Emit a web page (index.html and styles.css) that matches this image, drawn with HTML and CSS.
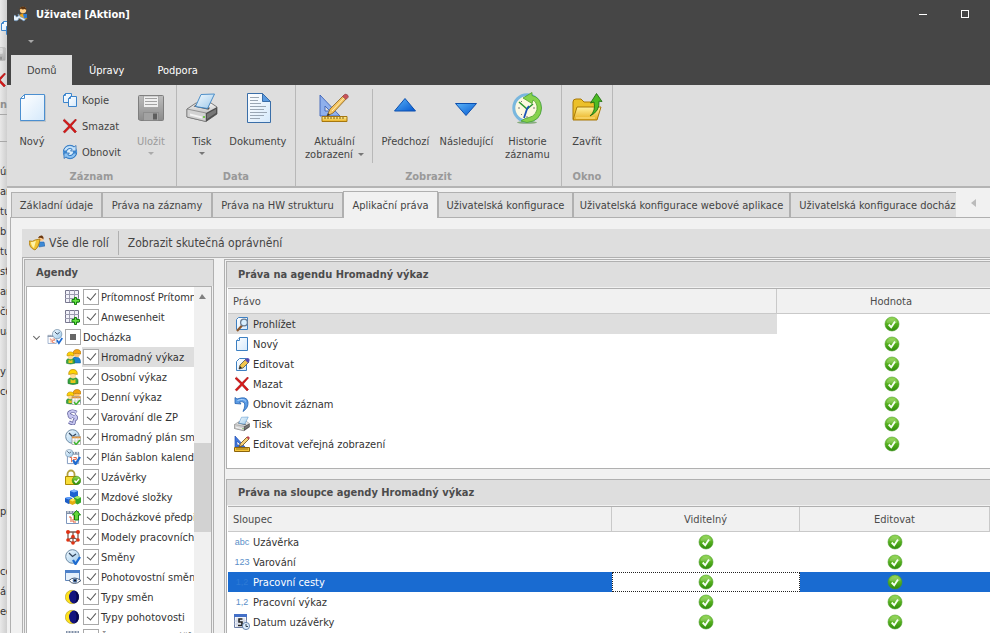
FILE: index.html
```html
<!DOCTYPE html>
<html lang="cs">
<head>
<meta charset="utf-8">
<title>Uživatel [Aktion]</title>
<link rel="stylesheet" href="styles.css">
</head>
<body>
<svg class="defs" aria-hidden="true">
  <defs>
    <linearGradient id="gPage" x1="0" y1="0" x2="1" y2="1"><stop offset="0" stop-color="#fff"/><stop offset="1" stop-color="#d5e9fb"/></linearGradient>
    <linearGradient id="gBlue" x1="0" y1="0" x2="1" y2="1"><stop offset="0" stop-color="#5bb4f8"/><stop offset="1" stop-color="#0457cf"/></linearGradient>
    <linearGradient id="gGreen" x1="0" y1="0" x2="0" y2="1"><stop offset="0" stop-color="#9bdc5c"/><stop offset=".5" stop-color="#55b01d"/><stop offset="1" stop-color="#2f8a0c"/></linearGradient>
    <linearGradient id="gGold" x1="0" y1="0" x2="0" y2="1"><stop offset="0" stop-color="#fff3a0"/><stop offset="1" stop-color="#e9ae1c"/></linearGradient>
    <linearGradient id="gGrey" x1="0" y1="0" x2="0" y2="1"><stop offset="0" stop-color="#f4f4f4"/><stop offset="1" stop-color="#9b9b9b"/></linearGradient>
    <linearGradient id="gSteel" x1="0" y1="0" x2="0" y2="1"><stop offset="0" stop-color="#bdbdbd"/><stop offset="1" stop-color="#8b8b8b"/></linearGradient>
    <linearGradient id="gSky" x1="0" y1="0" x2="1" y2="1"><stop offset="0" stop-color="#f4fbff"/><stop offset="1" stop-color="#9cc8ea"/></linearGradient>

    <symbol id="user" viewBox="0 0 16 16"><path d="M5 9q3-3 7 0l1 4H5z" fill="#e8a520" stroke="#9a6208" stroke-width=".6"/><path d="M9 8h4v4h-3z" fill="#2c7ad0"/><circle cx="9" cy="4" r="3.2" fill="#ffd08a"/><path d="M5.500 4Q5.500.5 9 .5t3.500 4L11 3Q8 4 7 2.500z" fill="#5a3311"/><path d="M1 9a3 3 0 1 0 4 3l5 3 1.500-2L6 10.500A3 3 0 0 0 4 8l.5 2L2.500 11z" fill="#e9f3fb" stroke="#6a94bd" stroke-width=".7"/></symbol>
    <symbol id="new32" viewBox="0 0 32 32"><path d="M8.500 3.500h21.500v26.500h-26v-23z" fill="#8a9aaa" opacity=".35"/><path d="M8.500 2.500h20v26h-24v-22z" fill="url(#gPage)" stroke="#4b8fd0"/><path d="M4.500 6.500h4v-4z" fill="#fff" stroke="#4b8fd0"/></symbol>
    <symbol id="copy" viewBox="0 0 16 16"><path d="M3.500 1.500h6v9h-8v-7z" fill="url(#gPage)" stroke="#3b84cc"/><path d="M1.500 3.500h2v-2" fill="none" stroke="#3b84cc"/><path d="M8.500 4.500h6v10h-8v-8z" fill="url(#gPage)" stroke="#3b84cc"/><path d="M6.500 6.500h2v-2" fill="none" stroke="#3b84cc"/></symbol>
    <symbol id="del" viewBox="0 0 16 16"><path d="M1 2.500l1.500-1.300L8 6.600 13.500 1l1 1L9.300 8l5.200 5.500-1.500 1.500L8 9.600 2.700 15l-1.500-1.300L6.700 8z" fill="#d81717" stroke="#8e0b0b" stroke-width=".5"/></symbol>
    <symbol id="refresh" viewBox="0 0 16 16"><circle cx="8" cy="8" r="7.200" fill="#4c97dd"/><circle cx="8" cy="8" r="3" fill="#dceefb"/><path d="M1.500 7a6.500 6.500 0 0 1 10.500-4l2-1.500V7H8.500l1.700-1.800A3.600 3.600 0 0 0 4.500 7z" fill="#c3e2fb" stroke="#1f63ae" stroke-width=".7"/><path d="M14.500 9a6.500 6.500 0 0 1-10.500 4l-2 1.500V9h5.500l-1.700 1.800A3.600 3.600 0 0 0 11.500 9z" fill="#8cc3f3" stroke="#1f63ae" stroke-width=".7"/></symbol>
    <symbol id="save" viewBox="0 0 32 32"><path d="M3.500 4.500q0-1 1-1h23q1 0 1 1v23q0 1-1 1h-22l-2-1z" fill="url(#gSteel)" stroke="#7e7e7e"/><path d="M8.500 4h15v11.500h-15z" fill="#efefef" stroke="#8f8f8f" stroke-width=".6"/><path d="M10 6.500h12M10 9.500h12M10 12.500h12" stroke="#a2a2a2"/><path d="M8.500 20.500h15v8h-15z" fill="#a2a2a2" stroke="#818181" stroke-width=".6"/><path d="M18 21.500h4v6h-4z" fill="#5d5d5d"/></symbol>
    <symbol id="print" viewBox="0 0 32 32"><path d="M1 17l9-6h15l6 4v7L20 29.500 1 25z" fill="url(#gGrey)" stroke="#5d5d5d" stroke-width=".8"/><path d="M1 17l19 4v8.500L1 25z" fill="#d2d2d2" stroke="#6a6a6a" stroke-width=".6"/><path d="M20 21l11-6v7l-11 7.500z" fill="#4e4e4e"/><path d="M21 22l9-5v4l-9 6z" fill="#777"/><path d="M4 21.500l12 3v2L4 23.500z" fill="#f3f3f3"/><circle cx="18" cy="25" r="1" fill="#55c327"/><path d="M7.500 14.500l15 3.300 1.500-2-14-3.300z" fill="#555"/><path d="M9.500 14.500L15 2.500l13.500-.5-7 14.500z" fill="url(#gSky)" stroke="#3c84c4" stroke-width=".9"/></symbol>
    <symbol id="docs" viewBox="0 0 32 32"><path d="M5.500 1.500h15l8 8v21h-23z" fill="url(#gPage)" stroke="#3a6ea8"/><path d="M20.500 1.500l8 8h-8z" fill="#5a9ae0" stroke="#3a6ea8"/><path d="M8 5.500h9M8 8.500h8M8 11.500h11M8 14.500h16M8 17.500h14M8 20.500h17M8 23.500h14M8 26.500h10" stroke="#9aa6b3"/></symbol>
    <symbol id="design" viewBox="0 0 32 32"><path d="M2 3l20 21H2zM7 14v5h5z" fill="#8fb0ec" fill-rule="evenodd" stroke="#3c62b8" stroke-width=".9"/><path d="M4 24.500h25v5H4z" fill="url(#gGold)" stroke="#a6770f"/><path d="M7 25v2m3-2v2m3-2v2m3-2v2m3-2v2m3-2v2m3-2v2" stroke="#7f5c10"/><path d="M9 24l3-7L26 3l3 3-14 15z" fill="#f3c260" stroke="#86601c" stroke-width=".8"/><path d="M14 19L27 5" stroke="#fff0b5"/><path d="M24.500 4.500L27 2q3 0 3.500 3L28 7.500z" fill="#c9525a" stroke="#7c3f42" stroke-width=".5"/><path d="M9 24l1-3 2 2z" fill="#333"/></symbol>
    <symbol id="design16" viewBox="0 0 16 16"><path d="M1 0l10 11H1zM3 5v4h4z" fill="#3f77e0" fill-rule="evenodd" stroke="#2450b0" stroke-width=".7"/><path d="M.5 11.500h15v4H.5z" fill="#f5c53a" stroke="#8c640b"/><path d="M3 12v2m2-2v2m2-2v2m2-2v2m2-2v2m2-2v2" stroke="#7f5c10" stroke-width=".8"/><path d="M5 11l1.500-3.500L13 1l2 2-6.500 6.500z" fill="#f6cf76" stroke="#6b4c14" stroke-width=".8"/><path d="M12.500 1.500L14 0l2 2-1.500 1.500z" fill="#bd4350"/></symbol>
    <symbol id="up" viewBox="0 0 32 32"><path d="M16 6.500l10.500 12.500h-21z" fill="url(#gBlue)" stroke="#0c4fae"/></symbol>
    <symbol id="down" viewBox="0 0 32 32"><path d="M16 23.500L5.500 11.500h21z" fill="url(#gBlue)" stroke="#0c4fae"/></symbol>
    <symbol id="history" viewBox="0 0 32 32"><ellipse cx="16" cy="30.500" rx="10" ry="1.300" fill="#4d8a3a" opacity=".6"/><circle cx="16" cy="16" r="13.200" fill="#fcf8e0" stroke="#79b7de" stroke-width="3"/><path d="M10 29q4-3 8-3.500A10 10 0 0 0 26 14q-1-5-4-6l-1 3.500L12 6l9-5.500v3q9 2 9.500 12.500Q30 29 16 30.500z" fill="#86d24c" stroke="#4ca02b" stroke-width=".8"/><path d="M7 16h2M24 16h-2M10 9l1 1M10 23l1-1M16 24v2" stroke="#777"/><path d="M8 10l8 7 6-5" fill="none" stroke="#2b9630" stroke-width="1.600"/><path d="M18 14l-2 3-3 9" fill="none" stroke="#1b53b8" stroke-width="1.800"/></symbol>
    <symbol id="close32" viewBox="0 0 32 32"><path d="M2 10q0-3 3-3h5l3 3h13v17H2z" fill="#ecc02a" stroke="#a87908"/><path d="M6 15h24l-4 13H2z" fill="url(#gGold)" stroke="#a87908"/><path d="M5 26h19" stroke="#ffe58b"/><path d="M19 24q6-5 4-14l-3.500 1 6-9.500 5.500 8-3-.3q1 10-9 14.800z" fill="#4cbb24" stroke="#216f12" stroke-width=".9"/></symbol>
    <symbol id="role" viewBox="0 0 16 16"><circle cx="12" cy="3.500" r="2.500" fill="#ffc98b"/><path d="M9 3q1-3 4-2.500 2 1 1.500 4Q13 2 9 3z" fill="#6a3710"/><path d="M9 7h6l1 4-6 1z" fill="#3d89d5" stroke="#1e5ba2" stroke-width=".5"/><path d="M0 6q4 1 6-1l5-1q-1 8-5 11Q0 13 0 6z" fill="#f1c232" stroke="#a4730b" stroke-width=".8"/><path d="M2 7q3 0 5-1.500L5 13Q2 11 2 7z" fill="#fff3a8"/></symbol>
    <symbol id="gridadd" viewBox="0 0 16 16"><path d="M.5 1.500h13v12H.5z" fill="#f2f2fa" stroke="#77778e"/><path d="M4.500 1v12M9.500 1v12M0 5.500h14M0 9.500h14" stroke="#9a9aae"/><path d="M9.500 8.500h2v2h3v2.500h-3v2.500h-2v-2.500h-2.500v-2.500h2.500z" fill="#68e044" stroke="#13830d"/></symbol>
    <symbol id="cal" viewBox="0 0 16 16"><path d="M1.500 3.500h12v11h-12z" fill="#fff" stroke="#7d96bd"/><path d="M1 2h13v3H1z" fill="#8090a8"/><path d="M3 1v3m3-3v3m3-3v3m3-3v3" stroke="#f6f6f6"/><path d="M4 8h2v5M8 8h3v2H8v3h3" fill="none" stroke="#e25b35"/></symbol>
    <symbol id="clock" viewBox="0 0 16 16"><circle cx="7.500" cy="7.500" r="6.800" fill="url(#gSky)" stroke="#6d8ba5"/><path d="M4 4l3.500 3.500L11 5" fill="none" stroke="#31455c" stroke-width="1.300"/></symbol>
    <symbol id="tick" viewBox="0 0 16 16"><path d="M8 11l2.500 4L15 8" fill="none" stroke="#1e6bd0" stroke-width="2.300"/></symbol>
    <symbol id="calclock" viewBox="0 0 16 16"><use href="#cal" x="0" y="4" width="11" height="12"/><use href="#clock" x="5" y="0" width="11" height="11"/><use href="#tick" x="4" y="2" width="12" height="14"/></symbol>
    <symbol id="person" viewBox="0 0 16 16"><path d="M3 14.500v-3q0-3 5-3t5 3v3q-5 2-10 0z" fill="#37a540" stroke="#176d27" stroke-width=".6"/><path d="M5.500 10l2.500 1.500L10.500 10v4h-5z" fill="#e8c51c"/><ellipse cx="8" cy="6" rx="3" ry="3.500" fill="#ffdb94"/><path d="M3.700 5.500Q3.500.5 8 .5t4.300 5Q8 3.500 3.700 5.500z" fill="#ffd400" stroke="#b88600" stroke-width=".7"/></symbol>
    <symbol id="people" viewBox="0 0 16 16"><g><path d="M7 12q1-5 5-4 4 1 3.500 6H9z" fill="#1c83cf" stroke="#14588f" stroke-width=".5"/><circle cx="12" cy="5.500" r="2.800" fill="#ffc36b"/><path d="M8 5q0-4.500 4-4.500T16 5q-4-1.500-8 0z" fill="#f5a50d" stroke="#ad6b00" stroke-width=".6"/></g><use href="#person" x="-1" y="2" width="13" height="14"/></symbol>
    <symbol id="minigrid" viewBox="0 0 16 16"><path d="M7 7.500h8.500v8H7z" fill="#fff" stroke="#888" stroke-width=".6"/><path d="M7 8.500h8.500" stroke="#e49232" stroke-width="1.600"/><path d="M10 8v7m3-7v7m-6-3h8" stroke="#bdbdbd" stroke-width=".6"/><path d="M9 13l2 2.500L15 11" fill="none" stroke="#3db52d" stroke-width="1.500"/></symbol>
    <symbol id="peoplegrid" viewBox="0 0 16 16"><use href="#people" width="16" height="16"/><use href="#minigrid" width="16" height="16"/></symbol>
    <symbol id="section" viewBox="0 0 16 16"><path d="M11.500 3.500Q8 1 5 3t2 4 3.500 3-1.500 3.500-5-.5M5 5q-2 2.500 2 4M10.500 10.500q2-2.500-1-4" fill="none" stroke="#5d5d98" stroke-width="3.400"/><path d="M11.500 3.500Q8 1 5 3t2 4 3.500 3-1.500 3.500-5-.5M5 5q-2 2.500 2 4M10.500 10.500q2-2.500-1-4" fill="none" stroke="#c5c5ef" stroke-width="2"/></symbol>
    <symbol id="clockgrid" viewBox="0 0 16 16"><use href="#clock" width="16" height="16"/><use href="#minigrid" width="16" height="16"/></symbol>
    <symbol id="calcheck" viewBox="0 0 16 16"><use href="#cal" x="1" y="1" width="15" height="15"/><use href="#clock" width="9" height="9"/><use href="#tick" width="16" height="16"/></symbol>
    <symbol id="lock" viewBox="0 0 16 16"><path d="M2.500 8V5a3.500 3.500 0 0 1 7 0v3" fill="none" stroke="#b2a13e" stroke-width="1.800"/><path d="M.5 7.500h11v8H.5z" fill="#f8dd38" stroke="#ad8c05"/><circle cx="11.500" cy="11.500" r="4.300" fill="url(#gGreen)" stroke="#24770d" stroke-width=".5"/><path d="M9.500 11.500l1.500 2 3-3.500" fill="none" stroke="#fff" stroke-width="1.300"/></symbol>
    <symbol id="cubes" viewBox="0 0 16 16"><path d="M5 2l4-1.500L13 2v5L9 9 5 7z" fill="#1c62d2"/><path d="M5 2l4 1.500L13 2 9 .5z" fill="#7fb4ff"/><path d="M0 9l4-1 3 1v4.500L3.500 15 0 13z" fill="#1d5fc8"/><path d="M0 9l3.500 1.500L7 9 4 8z" fill="#5fa1ff"/><path d="M9 8.500L12.500 7 16 8.500v5L12.500 15.500l-3.500-2z" fill="#36a82a"/><path d="M9 8.500l3.500 1.500L16 8.500 12.500 7z" fill="#a8ec6b"/><path d="M4.500 11l3-1.500 3 1.500v3.500L7.500 16l-3-1.500z" fill="#e6ae10"/><path d="M4.500 11l3 1.500 3-1.500-3-1.500z" fill="#ffe55c"/></symbol>
    <symbol id="calup" viewBox="0 0 16 16"><use href="#cal" width="16" height="16"/><path d="M11.500 1.500L15.500 6h-2v5h-4V6h-2z" fill="#64d83a" stroke="#14800d"/></symbol>
    <symbol id="model" viewBox="0 0 16 16"><path d="M3 3h10v8L8 14l-5-3zM8 3v11M3 11l5-3 5 3" fill="none" stroke="#7c5a50" stroke-width="1.300"/><g fill="#e03213"><circle cx="3" cy="3" r="2"/><circle cx="13" cy="3" r="2"/><circle cx="8" cy="7.500" r="1.800"/><circle cx="3" cy="11" r="1.800"/><circle cx="13" cy="11" r="1.800"/><circle cx="8" cy="14" r="1.800"/></g></symbol>
    <symbol id="clockcheck" viewBox="0 0 16 16"><use href="#clock" width="16" height="16"/><use href="#tick" width="16" height="16"/></symbol>
    <symbol id="wineye" viewBox="0 0 16 16"><path d="M.5 1.500h14v10H.5z" fill="#e5f0fc" stroke="#6085b8"/><path d="M0 1h15v3H0z" fill="#4c80ca"/><path d="M4 11.500q5-5 12 0-7 6-12 0z" fill="#fff" stroke="#485a72"/><circle cx="10" cy="11.500" r="2.300" fill="#5176aa"/><circle cx="10" cy="11.500" r="1" fill="#111"/></symbol>
    <symbol id="moon" viewBox="0 0 16 16"><circle cx="7" cy="8" r="6.700" fill="#ffe21e" stroke="#a99b25" stroke-width=".6"/><ellipse cx="9" cy="8" rx="5" ry="6.500" fill="#14147e"/><path d="M10 2a6 6.500 0 0 1 0 12q3-6 0-12z" fill="#07074d"/></symbol>
    <symbol id="ok" viewBox="0 0 16 16"><circle cx="8" cy="8" r="7" fill="url(#gGreen)" stroke="#479a25" stroke-width=".6"/><path d="M3 5q5-4 10 0v2q-5 1.500-10 0z" fill="#fff" opacity=".15"/><path d="M4.700 8.500l2.500 2.700L11 5.500" fill="none" stroke="#f4fff0" stroke-width="1.900"/></symbol>
    <symbol id="view" viewBox="0 0 16 16"><path d="M4.500 1.500h9v12h-11v-10z" fill="url(#gPage)" stroke="#3d80c2"/><path d="M8 9.500L3 15" stroke="#8d582d" stroke-width="2.200"/><circle cx="10" cy="6.500" r="3.400" fill="#d8efff" stroke="#6b7c91" stroke-width="1.300"/></symbol>
    <symbol id="new" viewBox="0 0 16 16"><path d="M5.500 1.500h8v13h-11v-10z" fill="url(#gPage)" stroke="#3d80c2"/><path d="M2.500 4.500h3v-3" fill="#fff" stroke="#3d80c2"/></symbol>
    <symbol id="edit" viewBox="0 0 16 16"><path d="M5.500 2.500h7v12h-10v-9z" fill="url(#gPage)" stroke="#3d80c2"/><path d="M5 13l1-4 6-6 3 3-6 6z" fill="#f1c54c" stroke="#4e4e4e" stroke-width=".8"/><path d="M11 4l2-2q3 0 2.500 3L14 7z" fill="#5546b3"/><path d="M5 13l1-3 2 2z" fill="#222"/></symbol>
    <symbol id="undo" viewBox="0 0 16 16"><path d="M1 1.500l2 1.500Q13-.5 14 6q.5 6-5 9.500Q12 9 10 6.500 8 5 5.500 6L7 8 1 7.500z" fill="#5b9ce5" stroke="#2360ae" stroke-width=".8"/><path d="M3.500 4.500q6-2.500 8.500 1" fill="none" stroke="#b5d8ff"/></symbol>
    <symbol id="date" viewBox="0 0 16 16"><path d="M.5 1.500h12v12H.5z" fill="#f4f6fb" stroke="#6b7da5"/><path d="M0 0h13v3H0z" fill="#4470c8"/><path d="M0 7h13M0 10h13M3 4v9M10 4v9" stroke="#b8c3d9" stroke-width=".7"/><path d="M8.500 5H5v3h3v3.500H4" fill="none" stroke="#222" stroke-width="1.600"/><circle cx="12" cy="12" r="3.600" fill="#dcebfb" stroke="#4b6e9e" stroke-width=".8"/><path d="M12 10v2.500h2" fill="none" stroke="#345"/></symbol>
  </defs>
</svg>

<div class="desktop">
  <div class="behind" aria-hidden="true">
    <div class="behind-ribbon">
      <svg class="i16"><use href="#copy"/></svg>
      <svg class="i16 dim"><use href="#save"/></svg>
      <svg class="i16"><use href="#del"/></svg>
      <b>na</b>
    </div>
    <div class="behind-bar"></div>
    <ul class="behind-list">
      <li>ún</li><li>an</li><li>tu</li><li>b</li><li>tu</li><li>st</li><li>aři</li><li>čn</li><li>ua</li><li></li><li>y s</li><li>ce</li><li></li><li></li><li></li><li></li><li></li><li>pr</li><li></li><li></li><li>co</li><li>á s</li><li>ec</li>
    </ul>
  </div>

  <main class="window">
    <header class="titlebar">
      <svg class="i16"><use href="#user"/></svg>
      <h1>Uživatel [Aktion]</h1>
      <button class="winbtn" aria-label="Minimalizovat"><span class="min"></span></button>
      <button class="winbtn" aria-label="Maximalizovat"><span class="max"></span></button>
    </header>
    <div class="quick"><button aria-label="Panel rychlého přístupu"><span class="caret"></span></button></div>
    <nav class="menu">
      <button class="on">Domů</button><button>Úpravy</button><button>Podpora</button>
    </nav>

    <div class="ribbon">
      <section class="group">
        <div class="tools">
          <button class="big narrow"><svg class="i32"><use href="#new32"/></svg>Nový</button>
          <div class="stack">
            <button><svg class="i16"><use href="#copy"/></svg>Kopie</button>
            <button><svg class="i16"><use href="#del"/></svg>Smazat</button>
            <button><svg class="i16"><use href="#refresh"/></svg>Obnovit</button>
          </div>
          <button class="big narrow" disabled><svg class="i32"><use href="#save"/></svg>Uložit<span class="caret"></span></button>
        </div>
        <h2>Záznam</h2>
      </section>
      <section class="group">
        <div class="tools">
          <button class="big narrow"><svg class="i32"><use href="#print"/></svg>Tisk<span class="caret"></span></button>
          <button class="big roomy"><svg class="i32"><use href="#docs"/></svg>Dokumenty</button>
        </div>
        <h2>Data</h2>
      </section>
      <section class="group">
        <div class="tools">
          <button class="big wide"><svg class="i32"><use href="#design"/></svg>Aktuální<span class="line">zobrazení <span class="caret"></span></span></button>
          <span class="rule"></span>
          <button class="big"><svg class="i32"><use href="#up"/></svg>Předchozí</button>
          <button class="big"><svg class="i32"><use href="#down"/></svg>Následující</button>
          <button class="big"><svg class="i32"><use href="#history"/></svg>Historie<span class="line">záznamu</span></button>
        </div>
        <h2>Zobrazit</h2>
      </section>
      <section class="group">
        <div class="tools">
          <button class="big narrow"><svg class="i32"><use href="#close32"/></svg>Zavřít</button>
        </div>
        <h2>Okno</h2>
      </section>
    </div>

    <div class="tabbar">
      <div class="tabs">
        <button class="t1">Základní údaje</button>
        <button class="t2">Práva na záznamy</button>
        <button class="t3">Práva na HW strukturu</button>
        <button class="t4 on">Aplikační práva</button>
        <button class="t5">Uživatelská konfigurace</button>
        <button class="t6">Uživatelská konfigurace webové aplikace</button>
        <button class="t7">Uživatelská konfigurace docházky</button>
      </div>
      <button class="scroll-left" aria-label="Předchozí záložky"><span></span></button>
    </div>

    <div class="page">
      <div class="toolbar">
        <button><svg class="i16"><use href="#role"/></svg>Vše dle rolí</button>
        <span class="rule"></span>
        <button>Zobrazit skutečná oprávnění</button>
      </div>
      <div class="split">
        <section class="agendas">
          <h3>Agendy</h3>
          <div class="treebox">
            <ul class="tree">
              <li><svg class="i16"><use href="#gridadd"/></svg><label><input type="checkbox" checked><span>Prítomnosť Prítomnosť</span></label></li>
              <li><svg class="i16"><use href="#gridadd"/></svg><label><input type="checkbox" checked><span>Anwesenheit</span></label></li>
              <li class="parent"><i class="chev"></i><svg class="i16"><use href="#calclock"/></svg><label><input type="checkbox" class="mixed"><span>Docházka</span></label></li>
              <li class="sel"><svg class="i16"><use href="#people"/></svg><label><input type="checkbox" checked><span>Hromadný výkaz</span></label></li>
              <li><svg class="i16"><use href="#person"/></svg><label><input type="checkbox" checked><span>Osobní výkaz</span></label></li>
              <li><svg class="i16"><use href="#peoplegrid"/></svg><label><input type="checkbox" checked><span>Denní výkaz</span></label></li>
              <li><svg class="i16"><use href="#section"/></svg><label><input type="checkbox" checked><span>Varování dle ZP</span></label></li>
              <li><svg class="i16"><use href="#clockgrid"/></svg><label><input type="checkbox" checked><span>Hromadný plán směn</span></label></li>
              <li><svg class="i16"><use href="#calcheck"/></svg><label><input type="checkbox" checked><span>Plán šablon kalendářů</span></label></li>
              <li><svg class="i16"><use href="#lock"/></svg><label><input type="checkbox" checked><span>Uzávěrky</span></label></li>
              <li><svg class="i16"><use href="#cubes"/></svg><label><input type="checkbox" checked><span>Mzdové složky</span></label></li>
              <li><svg class="i16"><use href="#calup"/></svg><label><input type="checkbox" checked><span>Docházkové předpisy</span></label></li>
              <li><svg class="i16"><use href="#model"/></svg><label><input type="checkbox" checked><span>Modely pracovních dob</span></label></li>
              <li><svg class="i16"><use href="#clockcheck"/></svg><label><input type="checkbox" checked><span>Směny</span></label></li>
              <li><svg class="i16"><use href="#wineye"/></svg><label><input type="checkbox" checked><span>Pohotovostní směny</span></label></li>
              <li><svg class="i16"><use href="#moon"/></svg><label><input type="checkbox" checked><span>Typy směn</span></label></li>
              <li><svg class="i16"><use href="#moon"/></svg><label><input type="checkbox" checked><span>Typy pohotovosti</span></label></li>
              <li><svg class="i16"><use href="#cal"/></svg><label><input type="checkbox" checked><span>Šablony kalendářů</span></label></li>
            </ul>
            <div class="scrollbar"><span class="arrow"></span><span class="thumb"></span></div>
          </div>
        </section>

        <div class="rights">
          <section class="panel first">
            <h3>Práva na agendu Hromadný výkaz</h3>
            <table class="grid values">
              <colgroup><col><col class="c-value"></colgroup>
              <thead><tr><th>Právo</th><th>Hodnota</th></tr></thead>
              <tbody>
                <tr class="hover"><td><div class="cell"><svg class="i16"><use href="#view"/></svg>Prohlížet</div></td><td><svg class="i16"><use href="#ok"/></svg></td></tr>
                <tr><td><div class="cell"><svg class="i16"><use href="#new"/></svg>Nový</div></td><td><svg class="i16"><use href="#ok"/></svg></td></tr>
                <tr><td><div class="cell"><svg class="i16"><use href="#edit"/></svg>Editovat</div></td><td><svg class="i16"><use href="#ok"/></svg></td></tr>
                <tr><td><div class="cell"><svg class="i16"><use href="#del"/></svg>Mazat</div></td><td><svg class="i16"><use href="#ok"/></svg></td></tr>
                <tr><td><div class="cell"><svg class="i16"><use href="#undo"/></svg>Obnovit záznam</div></td><td><svg class="i16"><use href="#ok"/></svg></td></tr>
                <tr><td><div class="cell"><svg class="i16"><use href="#print"/></svg>Tisk</div></td><td><svg class="i16"><use href="#ok"/></svg></td></tr>
                <tr><td><div class="cell"><svg class="i16"><use href="#design16"/></svg>Editovat veřejná zobrazení</div></td><td><svg class="i16"><use href="#ok"/></svg></td></tr>
              </tbody>
            </table>
          </section>
          <section class="panel second">
            <h3>Práva na sloupce agendy Hromadný výkaz</h3>
            <table class="grid">
              <colgroup><col><col class="c-view"><col class="c-edit"></colgroup>
              <thead><tr><th>Sloupec</th><th>Viditelný</th><th>Editovat</th></tr></thead>
              <tbody>
                <tr><td><div class="cell"><span class="type">abc</span>Uzávěrka</div></td><td><svg class="i16"><use href="#ok"/></svg></td><td><svg class="i16"><use href="#ok"/></svg></td></tr>
                <tr><td><div class="cell"><span class="type">123</span>Varování</div></td><td><svg class="i16"><use href="#ok"/></svg></td><td><svg class="i16"><use href="#ok"/></svg></td></tr>
                <tr class="active"><td><div class="cell"><span class="type">1,2</span>Pracovní cesty</div></td><td class="focus"><svg class="i16"><use href="#ok"/></svg></td><td><svg class="i16"><use href="#ok"/></svg></td></tr>
                <tr><td><div class="cell"><span class="type">1,2</span>Pracovní výkaz</div></td><td><svg class="i16"><use href="#ok"/></svg></td><td><svg class="i16"><use href="#ok"/></svg></td></tr>
                <tr><td><div class="cell"><svg class="i16"><use href="#date"/></svg>Datum uzávěrky</div></td><td><svg class="i16"><use href="#ok"/></svg></td><td><svg class="i16"><use href="#ok"/></svg></td></tr>
              </tbody>
            </table>
          </section>
        </div>
      </div>
    </div>
  </main>
</div>
</body>
</html>
```
FILE: styles.css
```css
* { box-sizing: border-box; }
html, body { height: 100%; }
body {
  margin: 0;
  overflow: hidden;
  font: 11px/13px Tahoma, "DejaVu Sans Condensed", "Noto Sans", sans-serif;
  color: #444;
  background: #e3e3e3;
}
button {
  margin: 0;
  padding: 0;
  border: 0;
  background: none;
  font: inherit;
  color: inherit;
  white-space: nowrap;
}
h1, h2, h3, ul { margin: 0; padding: 0; }
ul { list-style: none; }
.defs { position: absolute; width: 0; height: 0; }
.i16 { width: 16px; height: 16px; flex: none; display: block; }
.i32 { width: 32px; height: 32px; flex: none; display: block; }

.caret {
  display: inline-block;
  width: 0;
  height: 0;
  border: 3px solid transparent;
  border-top-color: #777;
  border-bottom: 0;
}

.desktop { display: flex; height: 100%; }

/* Window partly hidden behind */
.behind {
  flex: none;
  width: 7px;
  overflow: hidden;
  background: linear-gradient(90deg, #e9e9e9, #cfcfcf);
  color: #333;
}
.behind-ribbon {
  height: 115px;
  padding-top: 20px;
  display: flex;
  flex-direction: column;
  align-items: flex-end;
  gap: 10px;
  border-bottom: 1px solid #a8a8a8;
}
.behind-ribbon b { align-self: flex-start; color: #8f8f8f; }
.behind-ribbon .i16:first-child { align-self: flex-start; }
.behind-bar { height: 27px; margin-bottom: 20px; border-bottom: 1px solid #a8a8a8; }
.dim { opacity: .6; }
.behind-list li {
  height: 20px;
  line-height: 20px;
  white-space: nowrap;
}

.window {
  flex: 1;
  min-width: 0;
  display: flex;
  flex-direction: column;
  background: #f1f1f1;
}

.titlebar {
  flex: none;
  height: 28px;
  padding: 0 4px 0 7px;
  display: flex;
  align-items: center;
  background: #464646;
  color: #fff;
}
.titlebar h1 {
  flex: 1;
  margin-left: 6px;
  font-size: 11px;
  line-height: 13px;
}
.winbtn { width: 42px; height: 28px; display: grid; place-items: center; }
.min { width: 8px; height: 1px; background: #fff; }
.max { width: 8px; height: 8px; border: 1px solid #fff; }

.quick { flex: none; height: 27px; padding-left: 21px; background: #464646; }
.quick button { height: 27px; display: flex; align-items: center; }
.quick .caret { border-top-color: #a8a8a8; }

.menu { flex: none; height: 30px; padding-left: 4px; display: flex; gap: 1px; background: #464646; color: #fff; }
.menu button { height: 30px; padding: 0 16px; }
.menu .on { width: 61px; background: #dedede; color: #444; }

.ribbon {
  flex: none;
  height: 103px;
  display: flex;
  background: #dedede;
  border-bottom: 2px solid #b4b4b4;
}
.group {
  display: flex;
  flex-direction: column;
  border-right: 1px solid #b8b8b8;
}
.tools { flex: 1; display: flex; padding: 0 3px; }
.group h2 {
  height: 18px;
  font-size: 11px;
  line-height: 17px;
  text-align: center;
  color: #999;
}
.big {
  min-width: 61px;
  padding: 7px 2px 0;
  display: flex;
  flex-direction: column;
  align-items: center;
}
.big .i32 { margin-bottom: 11px; }
.big.narrow { min-width: 44px; }
.big.roomy { min-width: 68px; }
.big.wide { min-width: 71px; }
.big > .caret { margin-top: 4px; }
.line { display: flex; align-items: center; gap: 5px; }
.big:disabled { color: #9a9a9a; }
.big:disabled .caret { border-top-color: #aaa; }
.stack { padding: 2px 8px 0; display: flex; flex-direction: column; }
.stack button { height: 26px; display: flex; align-items: center; gap: 4px; }
.tools .rule { width: 1px; height: 74px; margin: 4px 2px 0; background: #b8b8b8; }

.tabbar {
  flex: none;
  height: 29px;
  padding: 3px 34px 0 4px;
  display: flex;
  position: relative;
}
.tabs {
  flex: 1;
  min-width: 0;
  margin-bottom: -1px;
  display: flex;
  align-items: flex-start;
  overflow: hidden;
  z-index: 1;
}
.tabs button {
  flex: none;
  height: 26px;
  margin-top: 1px;
  border: 1px solid #b0b0b0;
  border-width: 1px 1px 1px 1px;
  background: #dedede;
  text-align: center;
  overflow: hidden;
}
.tabs .on { margin-top: 0; height: 27px; border-bottom: 0; background: #f1f1f1; }
.t1 { width: 91px; }
.t2 { width: 110px; }
.t3 { width: 131px; }
.t4 { width: 95px; }
.t5 { width: 135px; }
.t6 { width: 217px; }
.t7 { width: 186px; }
.scroll-left { position: absolute; right: 0; top: 3px; width: 34px; height: 24px; display: grid; place-items: center; }
.scroll-left span { border: 4px solid transparent; border-right: 5px solid #bbb; border-left: 0; }

.page {
  flex: 1;
  min-height: 0;
  margin-left: 3px;
  padding: 11px 0 0 11px;
  display: flex;
  flex-direction: column;
  border: 1px solid #b0b0b0;
  border-width: 1px 0 0 1px;
}
.toolbar {
  flex: none;
  height: 28px;
  padding: 0 7px;
  display: flex;
  align-items: center;
  background: #dedede;
  font-size: 12px;
}
.toolbar button { display: flex; align-items: center; gap: 4px; }
.toolbar .rule { width: 1px; height: 24px; margin: 0 9px; background: #b0b0b0; }

.split {
  flex: 1;
  min-height: 0;
  display: flex;
  gap: 10px;
  padding: 1px 0 0 1px;
  border: 1px solid #b0b0b0;
  border-width: 1px 0 0 1px;
}
h3 {
  flex: none;
  height: 25px;
  font-size: 11px;
  line-height: 25px;
  padding-left: 11px;
  background: #dedede;
  color: #4c4c4c;
}
.agendas {
  flex: none;
  width: 190px;
  display: flex;
  flex-direction: column;
  border: 1px solid #b0b0b0;
  border-bottom: 0;
}
.agendas h3 { box-shadow: 0 1px #dedede; }
.treebox {
  flex: 1;
  min-height: 0;
  margin: 1px 1px 0;
  display: flex;
  border: 1px solid #b0b0b0;
  border-bottom: 0;
  background: #fff;
  overflow: hidden;
}
.tree { flex: 1; min-width: 0; overflow: hidden; }
.tree li {
  height: 20px;
  padding-left: 38px;
  display: flex;
  align-items: center;
  white-space: nowrap;
  color: #333;
}
.tree .parent { padding-left: 6px; }
.tree label { flex: 1; min-width: 0; height: 20px; margin-left: 1px; padding-left: 1px; display: flex; align-items: center; gap: 2px; overflow: hidden; }
.tree .sel label { background: #dedede; }
.tree input {
  appearance: none;
  flex: none;
  width: 16px;
  height: 16px;
  margin: 0;
  display: grid;
  place-items: center;
  border: 1px solid #a9a9a9;
  background: #fff;
}
.tree input:checked::after {
  content: "";
  width: 4px;
  height: 8px;
  margin-bottom: 3px;
  border: solid #555;
  border-width: 0 1px 1px 0;
  transform: rotate(40deg);
}
.tree .mixed::after { content: ""; width: 6px; height: 6px; background: #666; }
.chev {
  width: 5px;
  height: 5px;
  margin: 0 8px 1px 1px;
  border: solid #666;
  border-width: 0 1px 1px 0;
  transform: rotate(45deg);
}
.scrollbar { flex: none; width: 17px; background: #f0f0f0; }
.scrollbar span { display: block; }
.arrow { height: 0; margin: 7px 5px 0; border: 4px solid transparent; border-top: 0; border-bottom: 5px solid #808080; border-left-width: 3px; border-right-width: 4px; }
.thumb { height: 89px; margin-top: 144px; background: #d2d2d2; }

.rights {
  flex: 1;
  min-width: 0;
  display: flex;
  flex-direction: column;
  gap: 10px;
  padding: 1px 0 0 1px;
  border: 1px solid #b0b0b0;
  border-width: 1px 0 0 1px;
  overflow: hidden;
}
.panel { border: 1px solid #b0b0b0; border-right: 0; overflow: hidden; background: #fff; padding-left: 1px; }
.panel h3 { margin-left: -1px; box-shadow: 0 1px #f1f1f1; }
.first { flex: none; padding-bottom: 14px; }
.second { flex: 1; border-bottom: 0; }
.grid {
  width: 100%;
  margin-top: 1px;
  table-layout: fixed;
  border-collapse: separate;
  border-spacing: 0;
  border-top: 1px solid #b0b0b0;
  color: #333;
}
/* The value column runs under the window's right edge */
.values { width: calc(100% + 16px); }
.c-value { width: 229px; }
.c-view { width: 188px; }
.c-edit { width: 190px; }
.grid th {
  height: 25px;
  padding: 0;
  font-weight: normal;
  color: #4c4c4c;
  background: #f1f1f1;
  border: 1px solid #c9c9c9;
  border-width: 0 1px 1px 0;
}
.grid th:first-child { text-align: left; padding-left: 5px; }
.grid td { height: 20px; padding: 0; }
.grid td > .i16 { margin: 0 auto; }
.cell { height: 20px; padding-left: 6px; display: flex; align-items: center; gap: 3px; }
.type { width: 16px; font: 9px/13px "Liberation Sans", Arial, sans-serif; text-align: center; color: #5b8fc9; }
.hover td:first-child { background: #dedede; }
.active { background: #196bd1; color: #fff; }
.active .type { color: #2f7bd6; }
.grid .focus { background: #fff; outline: 1px dotted #222; outline-offset: -1px; }
```
